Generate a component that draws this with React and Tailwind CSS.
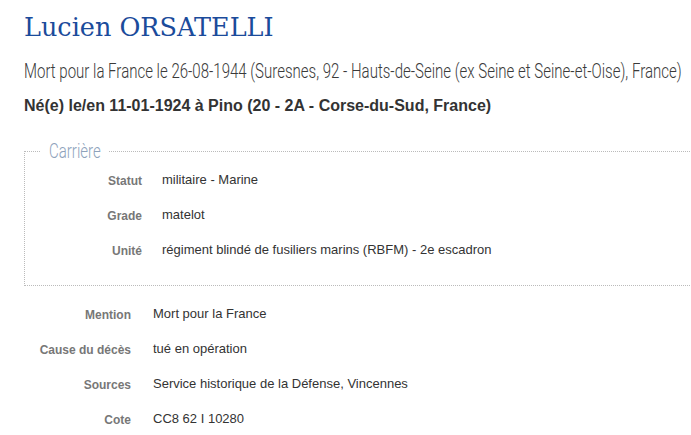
export default function App() {
  const career = [
    ["Statut", "militaire - Marine"],
    ["Grade", "matelot"],
    ["Unité", "régiment blindé de fusiliers marins (RBFM) - 2e escadron"],
  ];
  const other = [
    ["Mention", "Mort pour la France"],
    ["Cause du décès", "tué en opération"],
    ["Sources", "Service historique de la Défense, Vincennes"],
    ["Cote", "CC8 62 I 10280"],
  ];
  const sans = { fontFamily: '"Liberation Sans", Arial, sans-serif' };
  const cond = { fontFamily: 'Roboto, "Liberation Sans", sans-serif' };
  return (
    <div className="w-full h-[435px] overflow-hidden bg-white">
      <div className="pl-[24px] pt-[11px]">
        <h1
          className="text-[25.5px] leading-[32px] text-[#1b4b9b] font-normal whitespace-nowrap"
          style={{ fontFamily: '"DejaVu Serif", Georgia, serif' }}
        >
          Lucien ORSATELLI
        </h1>
        <div className="mt-[15px] h-[26px] whitespace-nowrap">
          <span
            className="inline-block origin-left scale-x-[0.715] text-[21px] leading-[26px] text-[#3a3a3a] font-light"
            style={cond}
          >
            Mort pour la France le 26-08-1944 (Suresnes, 92 - Hauts-de-Seine (ex Seine et Seine-et-Oise), France)
          </span>
        </div>
        <p className="mt-[12px] text-[16px] leading-[20px] font-bold text-[#333] whitespace-nowrap" style={sans}>
          Né(e) le/en 11-01-1924 à Pino (20 - 2A - Corse-du-Sud, France)
        </p>
        <fieldset className="mt-[24px] w-[720px] border border-dotted border-[#bbbbbb] pl-[10px] pb-[18px]">
          <legend className="ml-[5px] w-[68px] h-[22px] pl-[9px] whitespace-nowrap">
            <span
              className="inline-block origin-left scale-x-[0.715] text-[21px] leading-[22px] text-[#8ea2bb] font-light"
              style={cond}
            >
              Carrière
            </span>
          </legend>
          <div className="flex flex-col" style={sans}>
            {career.map(([k, v]) => (
              <div key={k} className="h-[35px] flex items-center gap-[20px]">
                <div className="w-[107px] pt-[2px] text-right text-[12px] font-bold text-[#777]">{k}</div>
                <div className="text-[13px] text-[#333]">{v}</div>
              </div>
            ))}
          </div>
        </fieldset>
        <div className="mt-[10px] flex flex-col" style={sans}>
          {other.map(([k, v]) => (
            <div key={k} className="h-[35px] flex items-center gap-[22px]">
              <div className="w-[107px] pt-[2px] text-right text-[12px] font-bold text-[#777]">{k}</div>
              <div className="text-[13px] text-[#333]">{v}</div>
            </div>
          ))}
        </div>
      </div>
    </div>
  );
}
